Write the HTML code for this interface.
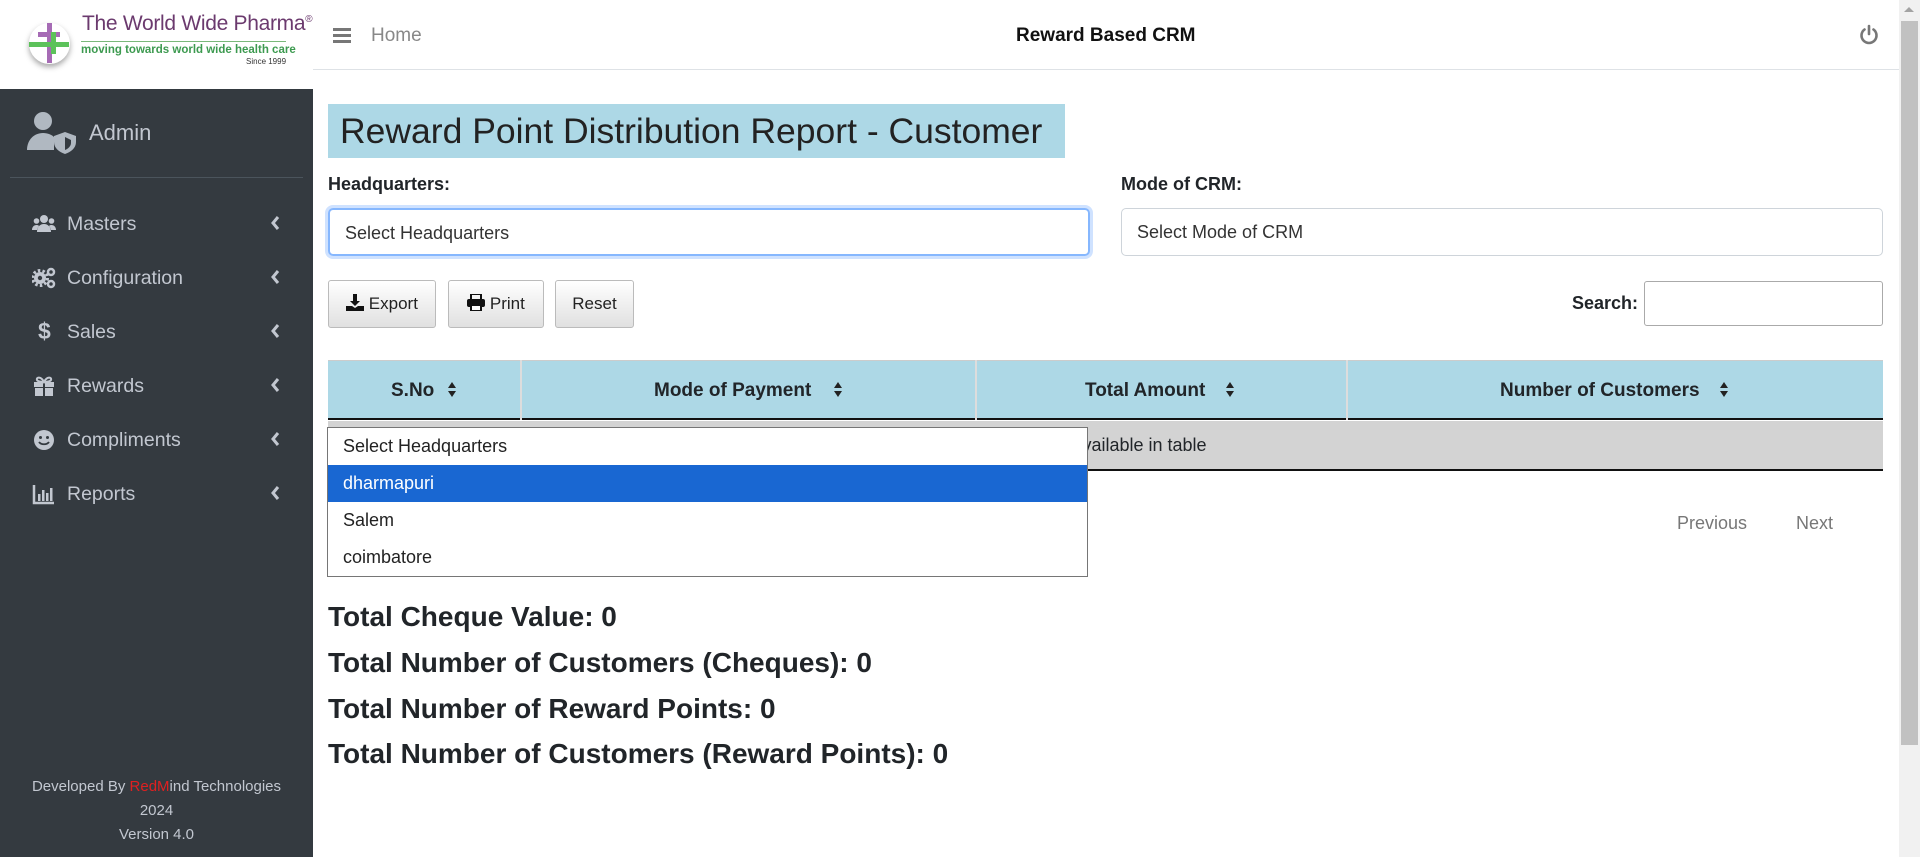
<!DOCTYPE html>
<html><head><meta charset="utf-8"><style>
*{box-sizing:border-box;margin:0;padding:0}
body{width:1920px;height:857px;overflow:hidden;font-family:"Liberation Sans",sans-serif;background:#fff;position:relative;color:#212529}
.abs{position:absolute}
#side{left:0;top:0;width:313px;height:857px;background:#343a40;color:#c2c7d0}
#logo{left:0;top:0;width:313px;height:89px;background:#fff}
.mi{position:absolute;left:32px;width:260px;font-size:19.5px;height:30px;line-height:30px}
.mi .ic{position:absolute;left:0;top:4px;width:24px;height:22px}
.mi .t{position:absolute;left:35px}
.mi .ch{position:absolute;left:238px;top:6px;width:10px;height:16px}
.btn{position:absolute;top:280px;height:48px;background:linear-gradient(#fff,#e0e0e0);border:1px solid #bbb;border-radius:3px;font-size:17px;line-height:46px;text-align:center;color:#222}
.sel{position:absolute;height:48px;border:1px solid #ced4da;border-radius:5px;font-size:18px;line-height:46px;padding-left:15px;color:#333}
.tot{position:absolute;left:328px;font-size:28px;font-weight:bold;color:#212529}
.opt{height:37px;line-height:37px;padding-left:15px;font-size:18px;color:#222}
.srt{font-size:15px;letter-spacing:-2px}
</style></head><body>
<div id="side" class="abs">
 <div id="logo" class="abs">
  <div class="abs" style="left:29px;top:23px;width:41px;height:41px;border-radius:50%;background:#fff;box-shadow:0 3px 6px rgba(0,0,0,.35)"></div>
  <div class="abs" style="left:47px;top:23px;width:5px;height:40px;background:#a66bb5"></div>
  <div class="abs" style="left:38px;top:32px;width:22px;height:5px;background:#a66bb5"></div>
  <div class="abs" style="left:29px;top:42px;width:40px;height:5px;background:#5cc25a"></div>
  <div class="abs" style="left:51px;top:32px;width:5px;height:22px;background:#5cc25a"></div>
  <div class="abs" style="left:82px;top:12px;font-size:21px;color:#6b3a6e;white-space:nowrap;letter-spacing:-0.3px">The World Wide Pharma<sup style="font-size:10px">®</sup></div>
  <div class="abs" style="left:81px;top:41px;width:205px;height:1px;background:#7ab87a"></div>
  <div class="abs" style="left:81px;top:44px;font-size:11.5px;font-weight:bold;color:#3d9a50;white-space:nowrap">moving towards world wide health care</div>
  <div class="abs" style="left:246px;top:57px;font-size:8px;color:#333">Since 1999</div>
 </div>
 <svg class="abs" style="left:25px;top:110px" width="52" height="44" viewBox="0 0 52 44"><circle cx="18" cy="11" r="9" fill="#b0b8c1"/><path d="M2 40c0-10 7-17 16-17 5 0 9 2 11 4v13z" fill="#b0b8c1"/><path d="M40 22l11 4v6c0 6-5 10-11 12-6-2-11-6-11-12v-6z" fill="#b0b8c1"/><path d="M40 27l6 3v3c0 3-3 6-6 7z" fill="#343a40"/></svg>
 <div class="abs" style="left:89px;top:120px;font-size:22px;color:#c2c7d0">Admin</div>
 <div class="abs" style="left:10px;top:177px;width:293px;height:1px;background:#4b545c"></div>
 <div class="mi" style="top:209px"><svg class="ic" viewBox="0 0 24 22"><circle cx="12" cy="6" r="4" fill="#c2c7d0"/><circle cx="4.5" cy="8" r="2.8" fill="#c2c7d0"/><circle cx="19.5" cy="8" r="2.8" fill="#c2c7d0"/><path d="M5 19c0-5 3-8 7-8s7 3 7 8z M0 17c0-3 2-5 4.5-5 1 0 2 .3 2.5 1-1 1-2 3-2 4z M24 17c0-3-2-5-4.5-5-1 0-2 .3-2.5 1 1 1 2 3 2 4z" fill="#c2c7d0"/></svg><span class="t">Masters</span><svg class="ch" viewBox="0 0 10 16"><path d="M8 2L3 8l5 6" stroke="#c2c7d0" stroke-width="3" fill="none"/></svg></div>
 <div class="mi" style="top:263px"><svg class="ic" viewBox="0 0 24 22"><circle cx="8" cy="11" r="6" fill="#c2c7d0"/><circle cx="8" cy="11" r="7.5" fill="none" stroke="#c2c7d0" stroke-width="3" stroke-dasharray="2.5 2.2"/><circle cx="8" cy="11" r="2.2" fill="#343a40"/><circle cx="19" cy="5" r="3" fill="none" stroke="#c2c7d0" stroke-width="2.5"/><circle cx="19" cy="17" r="3" fill="none" stroke="#c2c7d0" stroke-width="2.5"/></svg><span class="t">Configuration</span><svg class="ch" viewBox="0 0 10 16"><path d="M8 2L3 8l5 6" stroke="#c2c7d0" stroke-width="3" fill="none"/></svg></div>
 <div class="mi" style="top:317px"><span class="ic" style="font-weight:bold;font-size:23px;line-height:22px;left:6px;top:3px">$</span><span class="t">Sales</span><svg class="ch" viewBox="0 0 10 16"><path d="M8 2L3 8l5 6" stroke="#c2c7d0" stroke-width="3" fill="none"/></svg></div>
 <div class="mi" style="top:371px"><svg class="ic" viewBox="0 0 24 22"><rect x="2" y="7" width="20" height="5" fill="#c2c7d0"/><rect x="3" y="13" width="18" height="8" fill="#c2c7d0"/><rect x="11" y="7" width="2" height="14" fill="#343a40"/><path d="M12 7c-3-6-8-5-7-2 1 2 7 2 7 2 0 0 6 0 7-2 1-3-4-4-7 2z" fill="none" stroke="#c2c7d0" stroke-width="2"/></svg><span class="t">Rewards</span><svg class="ch" viewBox="0 0 10 16"><path d="M8 2L3 8l5 6" stroke="#c2c7d0" stroke-width="3" fill="none"/></svg></div>
 <div class="mi" style="top:425px"><svg class="ic" viewBox="0 0 24 22"><circle cx="12" cy="11" r="10" fill="#c2c7d0"/><circle cx="8.5" cy="8.5" r="1.5" fill="#343a40"/><circle cx="15.5" cy="8.5" r="1.5" fill="#343a40"/><path d="M7 13c2 3 8 3 10 0" stroke="#343a40" stroke-width="1.8" fill="none"/></svg><span class="t">Compliments</span><svg class="ch" viewBox="0 0 10 16"><path d="M8 2L3 8l5 6" stroke="#c2c7d0" stroke-width="3" fill="none"/></svg></div>
 <div class="mi" style="top:479px"><svg class="ic" viewBox="0 0 24 22"><path d="M2 2v18h20" stroke="#c2c7d0" stroke-width="2.5" fill="none"/><rect x="6" y="11" width="2.5" height="7" fill="#c2c7d0"/><rect x="10" y="7" width="2.5" height="11" fill="#c2c7d0"/><rect x="14" y="10" width="2.5" height="8" fill="#c2c7d0"/><rect x="18" y="5" width="2.5" height="13" fill="#c2c7d0"/></svg><span class="t">Reports</span><svg class="ch" viewBox="0 0 10 16"><path d="M8 2L3 8l5 6" stroke="#c2c7d0" stroke-width="3" fill="none"/></svg></div>
 <div class="abs" style="left:0;width:313px;top:775px;text-align:center;font-size:15px;line-height:24px;color:#c2c7d0">Developed By <span style="color:#e02020">Red</span><span style="color:#e02020">M</span>ind Technologies<br>2024<br>Version 4.0</div>
</div>
<div class="abs" style="left:313px;top:0;width:1586px;height:70px;border-bottom:1px solid #dee2e6;background:#fff"></div>
<div class="abs" style="left:333px;top:28px;width:18px;height:3px;background:#777;box-shadow:0 6px 0 #777,0 12px 0 #777"></div>
<div class="abs" style="left:371px;top:25px;font-size:19px;color:#888">Home</div>
<div class="abs" style="left:1016px;top:25px;font-size:19px;font-weight:bold;color:#111">Reward Based CRM</div>
<svg class="abs" style="left:1858px;top:24px" width="22" height="22" viewBox="0 0 22 22"><path d="M6.5 5.5a7.5 7.5 0 1 0 9 0" stroke="#777" stroke-width="2.6" fill="none" stroke-linecap="round"/><path d="M11 2v8" stroke="#777" stroke-width="2.6" stroke-linecap="round"/></svg>
<div class="abs" style="left:1899px;top:0;width:21px;height:857px;background:#f1f1f1"></div>
<div class="abs" style="left:1901px;top:21px;width:17px;height:724px;background:#c1c1c1"></div>
<div class="abs" style="left:1904px;top:7px;width:0;height:0;border-left:5px solid transparent;border-right:5px solid transparent;border-bottom:5px solid #a3a3a3"></div>
<div class="abs" style="left:328px;top:104px;width:737px;height:54px;background:#add8e6;font-size:35.5px;line-height:54px;padding-left:12px;color:#222;white-space:nowrap">Reward Point Distribution Report - Customer</div>
<div class="abs" style="left:328px;top:174px;font-size:18px;font-weight:bold">Headquarters:</div>
<div class="abs" style="left:1121px;top:174px;font-size:18px;font-weight:bold">Mode of CRM:</div>
<div class="sel" style="left:328px;top:208px;width:762px;border:2px solid #86b7fe;box-shadow:0 0 0 3px rgba(13,110,253,.2)">Select Headquarters</div>
<div class="sel" style="left:1121px;top:208px;width:762px">Select Mode of CRM</div>
<div class="btn" style="left:328px;width:108px"><svg width="18" height="17" viewBox="0 0 18 17" style="vertical-align:-2px"><path d="M7 0h4v7h3l-5 5-5-5h3z" fill="#111"/><path d="M0 12h6l3 2 3-2h6v5H0z" fill="#111"/></svg> Export</div>
<div class="btn" style="left:448px;width:96px"><svg width="18" height="17" viewBox="0 0 18 17" style="vertical-align:-2px"><rect x="4" y="0" width="10" height="6" fill="none" stroke="#111" stroke-width="2"/><rect x="0" y="5" width="18" height="8" rx="2" fill="#111"/><rect x="4" y="11" width="10" height="6" fill="#fff" stroke="#111" stroke-width="2"/></svg> Print</div>
<div class="btn" style="left:555px;width:79px">Reset</div>
<div class="abs" style="left:1572px;top:293px;font-size:18px;font-weight:bold">Search:</div>
<div class="abs" style="left:1644px;top:281px;width:239px;height:45px;border:1px solid #aaa;border-radius:3px"></div>
<div class="abs" style="left:328px;top:360px;width:1555px;height:60px;background:#add8e6;border-bottom:2px solid #111;border-top:1px solid #ccc"></div>
<div class="abs" style="left:520px;top:360px;width:2px;height:60px;background:#ddd"></div>
<div class="abs" style="left:975px;top:360px;width:2px;height:60px;background:#ddd"></div>
<div class="abs" style="left:1346px;top:360px;width:2px;height:60px;background:#ddd"></div>
<svg width="0" height="0" style="position:absolute"><defs><g id="s"><path d="M0 6L4 0L8 6z M0 9L4 15L8 9z" fill="#222"/></g></defs></svg>
<div class="abs" style="left:391px;top:380px;font-size:19px;font-weight:bold">S.No</div><svg class="abs" style="left:448px;top:382px" width="8" height="15"><use href="#s"/></svg>
<div class="abs" style="left:654px;top:380px;font-size:19px;font-weight:bold">Mode of Payment</div><svg class="abs" style="left:834px;top:382px" width="8" height="15"><use href="#s"/></svg>
<div class="abs" style="left:1085px;top:380px;font-size:19px;font-weight:bold">Total Amount</div><svg class="abs" style="left:1226px;top:382px" width="8" height="15"><use href="#s"/></svg>
<div class="abs" style="left:1500px;top:380px;font-size:19px;font-weight:bold">Number of Customers</div><svg class="abs" style="left:1720px;top:382px" width="8" height="15"><use href="#s"/></svg>
<div class="abs" style="left:328px;top:421px;width:1555px;height:50px;background:#d3d3d3;border-bottom:2px solid #111;text-align:center;font-size:18px;line-height:48px">No data available in table</div>
<div class="abs" style="left:1677px;top:513px;font-size:18px;color:#777">Previous</div>
<div class="abs" style="left:1796px;top:513px;font-size:18px;color:#777">Next</div>
<div class="abs" style="left:327px;top:427px;width:761px;height:150px;background:#fff;border:1px solid #767676">
 <div class="opt">Select Headquarters</div>
 <div class="opt" style="background:#1967d2;color:#fff">dharmapuri</div>
 <div class="opt">Salem</div>
 <div class="opt">coimbatore</div>
</div>
<div class="tot" style="top:601px">Total Cheque Value: 0</div>
<div class="tot" style="top:647px">Total Number of Customers (Cheques): 0</div>
<div class="tot" style="top:693px">Total Number of Reward Points: 0</div>
<div class="tot" style="top:738px">Total Number of Customers (Reward Points): 0</div>
</body></html>
